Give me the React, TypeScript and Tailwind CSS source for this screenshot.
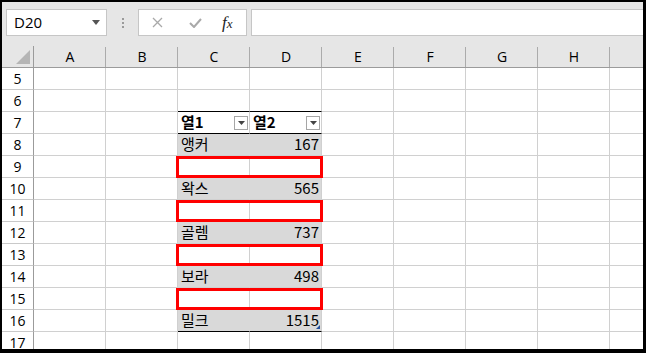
const COLS = ['A', 'B', 'C', 'D', 'E', 'F', 'G', 'H'];

// 표 데이터 (C7:D16)
const data: Record<number, { name: string; value: string } | null> = {
  8: { name: '앵커', value: '167' },
  9: null,
  10: { name: '왁스', value: '565' },
  11: null,
  12: { name: '골렘', value: '737' },
  13: null,
  14: { name: '보라', value: '498' },
  15: null,
  16: { name: '밀크', value: '1515' },
};

const cellFont = { fontFamily: '"Noto Sans CJK KR", "Noto Sans", sans-serif' };
const uiFont = { fontFamily: '"Open Sans", "Noto Sans", sans-serif' };

function FilterButton() {
  return (
    <div className="w-[14px] h-[14px] border border-[#a6a6a6] bg-white flex items-center justify-center shrink-0">
      <svg width="7" height="4" viewBox="0 0 7 4">
        <path d="M0 0h7L3.5 4z" fill="#444" />
      </svg>
    </div>
  );
}

function FormulaBar() {
  return (
    <div className="h-[44px] flex items-start pt-[7px] pl-[4px] gap-0">
      <div className="w-[101px] h-[27px] bg-white border border-[#c6c6c6] flex items-center justify-between pl-[7px] pr-[6px]">
        <span className="text-[15px] text-black" style={uiFont}>D20</span>
        <svg width="8" height="5" viewBox="0 0 8 5"><path d="M0 0h8L4 5z" fill="#555" /></svg>
      </div>
      <div className="w-[31px] h-[27px] flex flex-col items-center justify-center gap-[2px]">
        <span className="w-[2px] h-[2px] bg-[#9a9a9a]" />
        <span className="w-[2px] h-[2px] bg-[#9a9a9a]" />
        <span className="w-[2px] h-[2px] bg-[#9a9a9a]" />
      </div>
      <div className="w-[109px] h-[27px] bg-white border border-[#c6c6c6] flex items-center">
        <svg className="ml-[13px]" width="11" height="11" viewBox="0 0 11 11">
          <path d="M1 1l9 9M10 1l-9 9" stroke="#a9a9a9" strokeWidth="1.3" />
        </svg>
        <svg className="ml-[26px]" width="13" height="10" viewBox="0 0 13 10">
          <path d="M1 5l4 4 7-8" stroke="#a9a9a9" strokeWidth="2" fill="none" />
        </svg>
        <span className="ml-[20px] text-[17px] leading-none italic text-[#222]" style={{ fontFamily: '"Liberation Serif", serif' }}>
          f<span className="text-[13px]">x</span>
        </span>
      </div>
      <div className="ml-[4px] flex-1 h-[27px] bg-white border border-[#c6c6c6] border-r-0" />
    </div>
  );
}

function ColumnHeader() {
  return (
    <div className="flex h-[22px] border-b border-[#9b9b9b]" style={uiFont}>
      <div className="w-[32px] relative border-r border-[#9b9b9b] shrink-0">
        <svg className="absolute right-[3px] bottom-[3px]" width="14" height="14" viewBox="0 0 14 14">
          <path d="M14 0v14H0z" fill="#b5b5b5" />
        </svg>
      </div>
      {COLS.map((c) => (
        <div key={c} className="w-[72px] shrink-0 flex items-center justify-center text-[14px] text-black relative">
          {c}
          <span className="absolute right-0 top-[1px] bottom-0 w-px bg-[#ababab]" />
        </div>
      ))}
      <div className="flex-1" />
    </div>
  );
}

function Row({ n }: { n: number }) {
  const inTable = n >= 7 && n <= 16;
  const isHeader = n === 7;
  const row = data[n];
  const filled = row != null && inTable && !isHeader;

  const cellClass = (col: string) => {
    let cls = 'w-[72px] shrink-0 h-full border-r border-b border-[#d0d0d0] relative flex items-center';
    if (col === 'C' || col === 'D') {
      if (n === 6 || isHeader || n === 16) cls += ' !border-b-black';
      if (filled) cls += ' bg-[#d9d9d9]';
      if (filled && col === 'C') cls += ' !border-r-[#d9d9d9]';
    }
    return cls;
  };

  return (
    <div className="flex h-[22px]">
      <div
        className="w-[32px] shrink-0 h-full border-r border-[#9b9b9b] border-b border-b-[#c9c9c9] flex items-center justify-center text-[14px] text-black"
        style={uiFont}
      >
        {n}
      </div>
      {COLS.map((c) => (
        <div key={c} className={cellClass(c)} style={cellFont}>
          {isHeader && c === 'C' && (
            <div className="flex-1 flex items-center justify-between pl-[3px] pr-[1px]">
              <span className="text-[15px] font-bold text-black">열1</span>
              <FilterButton />
            </div>
          )}
          {isHeader && c === 'D' && (
            <div className="flex-1 flex items-center justify-between pl-[3px] pr-[1px]">
              <span className="text-[15px] font-bold text-black">열2</span>
              <FilterButton />
            </div>
          )}
          {filled && c === 'C' && <span className="pl-[3px] text-[15px] text-black">{row!.name}</span>}
          {filled && c === 'D' && <span className="ml-auto pr-[2px] text-[15px] text-black">{row!.value}</span>}
          {inTable && !isHeader && row === null && c === 'C' && (
            <div className="absolute left-[-2px] top-0 w-[147px] h-[22px] border-[3px] border-[#ff0000] z-10" />
          )}
          {n === 16 && c === 'D' && (
            <span className="absolute right-[1px] bottom-[2px] w-[4px] h-[4px] bg-[#1f4e9c]" style={{ clipPath: 'polygon(100% 0, 100% 100%, 0 100%)' }} />
          )}
        </div>
      ))}
      <div className="flex-1 h-full border-b border-[#d0d0d0]" />
    </div>
  );
}

export default function App() {
  const rows = [5, 6, 7, 8, 9, 10, 11, 12, 13, 14, 15, 16, 17];
  return (
    <div className="w-[646px] h-[353px] bg-black pt-[2px] pl-[2px] pr-[3px] pb-[4px] overflow-hidden">
      <div className="w-full h-full bg-[#e6e6e6] flex flex-col overflow-hidden">
        <FormulaBar />
        <ColumnHeader />
        <div className="flex-1 bg-white overflow-hidden">
          {rows.map((n) => (
            <Row key={n} n={n} />
          ))}
        </div>
      </div>
    </div>
  );
}
